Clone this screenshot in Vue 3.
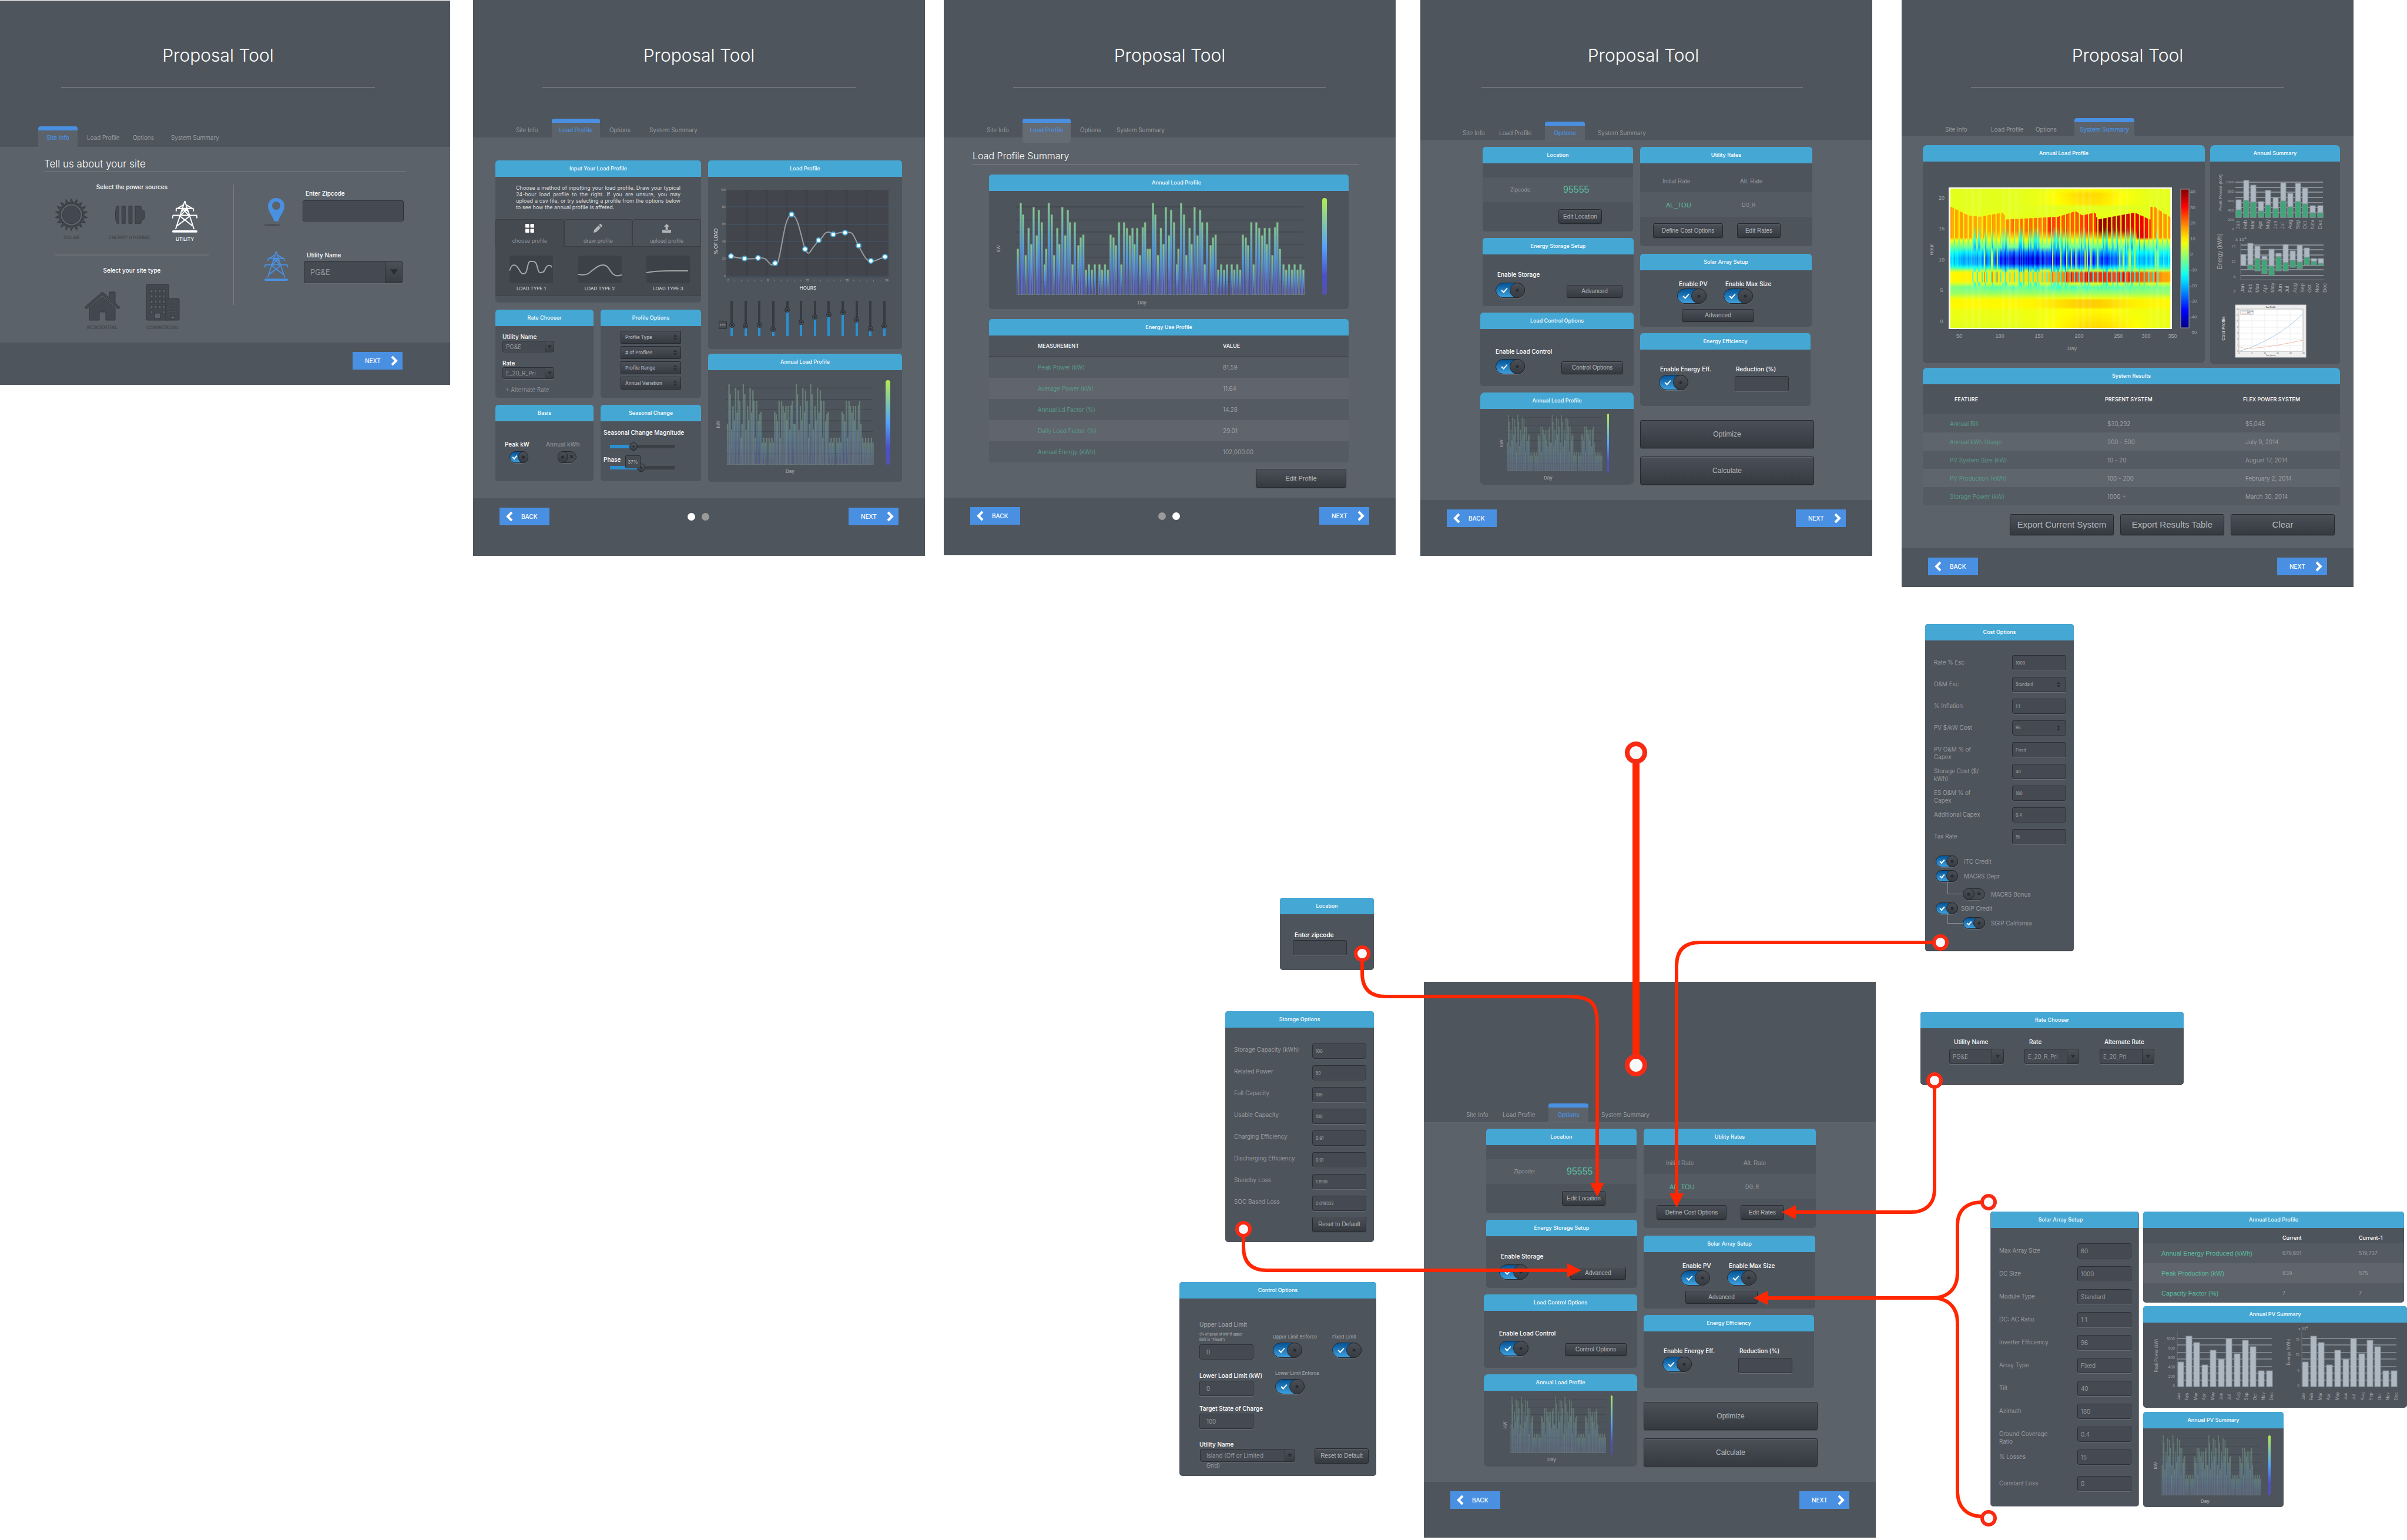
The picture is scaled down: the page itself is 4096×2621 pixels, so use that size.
<script setup>
import { h } from 'vue'

const tabNames = ['Site Info', 'Load Profile', 'Options', 'System Summary']

/* ---- annual load bars: [x, top] on a 985 x 259 field ---- */
const firstHalf = [
  [265, 698], [275, 568], [283, 601], [292, 716], [302, 639], [311, 685], [319, 580], [330, 660], [337, 588],
  [347, 623], [357, 742], [362, 698], [371, 568], [381, 601], [389, 716], [400, 639], [407, 685], [417, 580],
  [427, 660], [436, 588], [443, 623], [452, 742], [460, 623], [472, 688], [480, 666], [489, 658], [498, 757],
  [508, 742], [518, 757], [528, 742], [544, 742], [553, 757], [563, 742], [573, 757], [582, 658], [592, 666],
  [600, 688], [611, 623], [619, 742], [628, 623], [638, 639], [648, 660], [657, 639], [664, 685], [673, 639],
  [683, 716], [692, 637], [700, 623], [709, 698]
]
const tail = [[1173, 742], [1182, 757], [1192, 742], [1202, 757], [1211, 742], [1221, 757], [1231, 742], [1241, 757]]
const loadBars = [...firstHalf, ...firstHalf.map(([x, y]) => [x + 452, y]), ...tail]
const loadLines = [579, 616, 650, 685, 721, 757, 791]

const LoadBars = props =>
  h('svg', { viewBox: '257 567 990 261', preserveAspectRatio: 'none', 'aria-hidden': 'true' }, [
    h('defs', [
      h('linearGradient', { id: 'bar-' + props.name, x1: 0, y1: 0, x2: 0, y2: 1 }, [
        h('stop', { offset: 0, 'stop-color': '#82cf86' }),
        h('stop', { offset: 0.45, 'stop-color': '#4b9bea' }),
        h('stop', { offset: 0.8, 'stop-color': '#4b55c4' }),
        h('stop', { offset: 1, 'stop-color': '#4c4fae' })
      ])
    ]),
    ...loadLines.map(y => h('path', { d: `M257 ${y}H1242`, stroke: '#3d4249', 'stroke-width': 2 })),
    ...loadBars.map(([x, y]) =>
      h('rect', {
        x: x - 3, y, width: 6, height: 827 - y,
        fill: `url(#bar-${props.name})`, 'fill-opacity': props.ink || 1,
        stroke: '#80998f', 'stroke-opacity': props.ink ? 0.5 : 0.6,
        'stroke-width': props.ink ? 3 : 2
      })
    )
  ])
LoadBars.props = ['name', 'ink']

/* ---- day / hour heat map ---- */
const pick = (stops, t) => {
  for (let i = 1; i < stops.length; i++) {
    if (t <= stops[i][0]) {
      const [a, x] = stops[i - 1]
      const [b, y] = stops[i]
      return x + ((y - x) * (t - a)) / (b - a || 1)
    }
  }
  return stops[stops.length - 1][1]
}
const jet = v => {
  const t = (v + 50) / 92
  const c = k => Math.round(255 * Math.max(0, Math.min(1, 1.5 - Math.abs(4 * t - k))))
  return `rgb(${c(3)},${c(2)},${c(1)})`
}
const noise = i => {
  const s = Math.sin(i * 12.9898) * 43758.5453
  return s - Math.floor(s)
}
const warm = [[0, 14], [0.24, 14], [0.25, 18], [0.43, 20], [0.44, 26], [0.55, 20], [0.6, 25], [0.66, 23], [0.67, 39], [0.75, 36], [0.85, 31], [0.91, 28], [0.92, 16], [1, 15]]
const cold = [[0, -20], [0.08, -24], [0.2, -30], [0.25, -42], [0.4, -43], [0.5, -38], [0.7, -35], [0.8, -24], [1, -20]]
const edge = [[0, 0.13], [0.08, 0.19], [0.13, 0.2], [0.24, 0.17], [0.25, 0.22], [0.49, 0.2], [0.57, 0.16], [0.6, 0.19], [0.66, 0.17], [0.67, 0.22], [0.84, 0.17], [0.91, 0.22], [0.915, 0.11], [0.96, 0.16], [1, 0.2]]
const lowBand = [[0, 8], [0.42, 11], [0.5, 17], [0.56, 24], [0.7, 27], [0.85, 24], [1, 15]]
const COLS = 190
const heat = Array.from({ length: COLS }, (_, i) => {
  const u = i / (COLS - 1)
  const n = noise(i + 1)
  const mid = u > 0.1 && u < 0.95
  const off = i % 4 === 3
  const streak = n > 0.88 && mid
  const deep = noise(i * 7 + 3) > 0.72 && mid
  const e = pick(edge, u)
  const hump = Math.exp(-(((u - 0.63) / 0.17) ** 2))
  const w = off ? 7 : pick(warm, u) + n * 3
  const c = streak ? 2 : pick(cold, u) * (off ? 1.1 : 0.75 + n * 0.3)
  const lo = off && mid ? -14 : pick(lowBand, u) + (streak ? 8 : 0)
  return [
    [0, 5 + 2 * hump], [0.04, 5 + 6 * hump], [0.11, 5 + 5 * hump], [0.13, 5], [e, 5 + n], [e + 0.004, w],
    [deep ? 0.27 : 0.3 + (u < 0.15 || u > 0.85 ? 0.05 : 0), w], [0.37, deep ? -12 : off ? -8 : 7],
    [0.42, deep ? -22 : -6], [0.46, c * 0.75],
    [0.5, c], [0.54, c * 0.95], [0.565, c * 0.6], [0.59, deep ? c * 0.5 : 2], [0.605, lo], [0.665, lo],
    [0.68, deep ? -12 : 4], [0.71, -4 - 9 * n * Math.sin(Math.PI * u)], [0.75, -2], [0.79, 6], [0.8, 8 + 4 * hump],
    [0.85, 8 + 4 * hump], [0.87, 6 + 2 * hump], [1, 5 + 6 * Math.exp(-(((u - 0.66) / 0.2) ** 2))]
  ]
})
const HeatMap = () =>
  h('g', [
    h('defs', heat.map((s, i) =>
      h('linearGradient', { id: 'heat' + i, x1: 0, y1: 0, x2: 0, y2: 1 },
        s.map(([o, v]) => h('stop', { offset: o, 'stop-color': jet(v) }))))),
    h('rect', { x: 44, y: 44, width: 380, height: 241, fill: '#fff' }),
    ...heat.map((_, i) =>
      h('rect', { x: 47 + (i * 374) / COLS, y: 46, width: 374 / COLS + 0.3, height: 237, fill: `url(#heat${i})` })),
    h('defs', [
      h('linearGradient', { id: 'heat-scale', x1: 0, y1: 0, x2: 0, y2: 1 },
        Array.from({ length: 24 }, (_, k) => h('stop', { offset: k / 23, 'stop-color': jet(42 - k * 4) })))
    ]),
    h('rect', { x: 439, y: 47, width: 14, height: 236, fill: 'url(#heat-scale)', stroke: '#9aa0a6' })
  ])
const hourMarks = [[20, 65], [15, 117], [10, 170], [5, 222], [0, 275]]
const dayMarks = [[50, 62], [100, 131], [150, 198], [200, 266], [250, 333], [300, 380], [350, 425]]
const scaleMarks = [40, 30, 20, 10, 0, -10, -20, -30, -40, -50]

/* ---- monthly charts ---- */
const months = ['Jan', 'Feb', 'Mar', 'Apr', 'May', 'Jun', 'Jul', 'Aug', 'Sep', 'Oct', 'Nov', 'Dec']
const peakBars = [[65, 82], [32, 66], [40, 69], [68, 84], [49, 74], [61, 80], [36, 67], [54, 77], [37, 68], [45, 72], [75, 87], [75, 87]]
const energyBars = [[158, 177, 177], [139, 176, 183], [144, 165, 186], [161, 167, 191], [149, 178, 194], [156, 162, 186], [141, 172, 186], [152, 168, 180], [142, 171, 182], [147, 163, 176], [165, 170, 177], [165, 173, 177]]
const pvTops = [67, 23, 34, 72, 47, 62, 27, 53, 30, 41, 82, 82]
const pvLines = [27, 38, 51, 62, 75, 86, 98]

/* ---- load profile editor ---- */
const points = [[39, 135], [62, 139], [85, 138], [114, 147], [142, 64], [165, 123], [188, 108], [213, 98], [233, 95], [256, 117], [277, 143], [301, 136]]
const levels = [28, 26, 27, 13, 78, 38, 54, 62, 71, 45, 15, 26]
const hourTicks = Array.from({ length: 25 }, (_, i) => i)
const profileSelects = ['Profile Type', '# of Profiles', 'Profile Range', 'Annual Variation']
const loadTypes = [
  ['LOAD TYPE 1', 'M0 26C3 16 7 14 12 18S18 31 23 31 29 28 31 18 35 10 40 10 46 14 48 22 52 30 57 28 60 18 66 17 71 19 72 20'],
  ['LOAD TYPE 2', 'M0 32C5 33 12 34 18 30S32 16 42 16 54 28 60 32 68 34 74 33'],
  ['LOAD TYPE 3', 'M0 29C14 26 28 26 40 26S62 26 71 26']
]

/* ---- tables and forms ---- */
const energyUse = [['Peak Power (kW)', '81.59'], ['Average Power (kW)', '11.64'], ['Annual Ld Factor (%)', '14.28'], ['Daily Load Factor (%)', '29.01'], ['Annual Energy (kWh)', '102,000.00']]
const results = [
  ['Annual Bill', '$30,292', '$5,048'],
  ['Annual kWh Usage', '200 - 500', 'July 9, 2014'],
  ['PV System Size (kW)', '10 - 20', 'August 17, 2014'],
  ['PV Production (kWh)', '100 - 200', 'February 2, 2014'],
  ['Storage Power (kW)', '1000 +', 'March 30, 2014']
]
const costRows = [['Rate % Esc', '1000'], ['O&M Esc', 'Standard', true], ['% Inflation', '1:1'], ['PV $/kW Cost', '96', true], ['PV O&M % of Capex', 'Fixed'], ['Storage Cost ($/ kWh)', '40'], ['ES O&M % of Capex', '180'], ['Additional Capex', '0.4'], ['Tax Rate', '15']]
const storageRows = [['Storage Capacity (kWh)', '100'], ['Related Power', '50'], ['Full Capacity', '108'], ['Usable Capacity', '108'], ['Charging Efficiency', '0.91'], ['Discharging Efficiency', '0.91'], ['Standby Loss', '1.1998'], ['SOC Based Loss', '0.019332']]
const solarRows = [['Max Array Size', '60'], ['DC Size', '1000'], ['Module Type', 'Standard'], ['DC: AC Ratio', '1:1'], ['Inverter Efficiency', '96'], ['Array Type', 'Fixed'], ['Tilt', '40'], ['Azimuth', '180'], ['Ground Coverage Ratio', '0.4'], ['% Losses', '15'], ['Constant Loss', '0']]
const produced = [['Annual Energy Produced (kWh)', '679,601', '519,737'], ['Peak Production (kW)', '839', '575'], ['Capacity Factor (%)', '7', '7']]
const rates = [['Utility Name', 'PG&E'], ['Rate', 'E_20_R_Pri'], ['Alternate Rate', 'E_20_Pri']]

const towerPath = 'M22 1 6 50M22 1 38 50M7 14H37M1 26H43M7 14V19M37 14V19M1 26V31M43 26V31M18 14 29 26M26 14 15 26M13 27 35 44M31 27 9 44M16 20 22 14 28 20M9 14 19 8M35 14 25 8'
const rays = Array.from({ length: 18 }, (_, i) => i * 20)

/* both Options boards share one template */
const optionBoards = [{ id: 'o1', cls: 'b4', title: true }, { id: 'o2', cls: 'b6', title: false }]
</script>

<template>
  <main class="canvas">
    <div class="flow">
      <!-- Site Info -->
      <section class="board b1">
        <header class="top">
          <h1>Proposal Tool</h1>
          <hr>
          <nav class="tabs"><a v-for="(t, i) in tabNames" :key="t" href="#" :class="{ on: i === 0 }">{{ t }}</a></nav>
        </header>
        <div class="body">
          <h2>Tell us about your site</h2>
          <div class="site">
            <div class="choices">
              <h4>Select the power sources</h4>
              <div class="sources">
                <button class="pick">
                  <svg class="ic" viewBox="0 0 56 56"><g fill="#434850" stroke="#34383e"><circle cx="28" cy="28" r="15.500" /><path v-for="r in rays" :key="r" d="M24.500 9 28 0 31.500 9Z" :transform="`rotate(${r} 28 28)`" /></g></svg>
                  <span>SOLAR</span>
                </button>
                <button class="pick">
                  <svg class="ic" viewBox="0 0 52 56"><g fill="#434850" stroke="#34383e"><path d="M7 13H4Q1 16 1 28T4 43H7ZM12 13H18V43H12ZM24 13H30V43H24ZM35 13H45L47 20 51 22V35L47 37 45 43H35Z" /></g></svg>
                  <span>ENERGY STORAGE</span>
                </button>
                <button class="pick lit">
                  <svg class="ic" viewBox="0 0 44 56"><path :d="towerPath" fill="none" stroke="#fff" stroke-width="2" /><rect y="52" width="44" height="4" rx="2" fill="#fff" /></svg>
                  <span>UTILITY</span>
                </button>
              </div>
              <hr>
              <h4>Select your site type</h4>
              <div class="types">
                <button class="pick">
                  <svg width="62" height="50" viewBox="0 0 62 50"><g fill="#434850" stroke="#34383e"><path d="M9 28 31 9 53 28V49H37V35H26V49H9Z" /><path d="M31 1 43 11V1H53V20L61 27 58 30 31 6 4 30 1 27Z" /></g></svg>
                  <span>RESIDENTIAL</span>
                </button>
                <button class="pick">
                  <svg width="58" height="63" viewBox="0 0 58 63">
                    <g fill="#434850" stroke="#34383e"><rect x="1" y="1" width="38" height="61" rx="2" /><rect x="34" y="25" width="23" height="37" rx="2" /></g>
                    <g fill="#5c636b" stroke="#34383e">
                      <template v-for="r in 5" :key="r"><rect v-for="c in 4" v-show="r < 5 || c === 1 || c === 4" :key="c" :x="1 + c * 7" :y="1 + r * 9" width="4" height="5" /></template>
                      <rect x="15" y="50" width="10" height="9" />
                      <template v-for="r in 5" :key="'s' + r"><rect v-for="c in 4" :key="c" :x="34 + c * 4" :y="26 + r * 5" width="2" height="2" stroke-width="0.500" /></template>
                      <rect x="43" y="55" width="6" height="5" />
                    </g>
                  </svg>
                  <span>COMMERCIAL</span>
                </button>
              </div>
            </div>
            <div class="where">
              <div class="whererow">
                <svg class="pin" viewBox="0 0 40 48"><ellipse cx="15" cy="46" rx="14" ry="2" fill="#4b5056" /><path fill="#4a90e2" fill-rule="evenodd" d="M22 0C14 0 8 6 8 14 8 22 16 31 18 38Q19 40 22 40T26 38C28 31 36 22 36 14 36 6 30 0 22 0ZM22 6A7 7 0 1 1 22 20 7 7 0 0 1 22 6Z" /></svg>
                <label class="stack">Enter Zipcode<input type="text" class="box zip"></label>
              </div>
              <div class="whererow">
                <svg class="pylon" viewBox="0 0 44 56"><path :d="towerPath" fill="none" stroke="#4a90e2" stroke-width="2" /><rect y="52" width="44" height="4" rx="2" fill="#4a90e2" /></svg>
                <label class="stack">Utility Name<select class="drop big"><option>PG&amp;E</option></select></label>
              </div>
            </div>
          </div>
        </div>
        <footer class="foot"><button class="go next">NEXT<svg viewBox="0 0 12 18"><path d="M2 2 9 9 2 16" /></svg></button></footer>
      </section>

      <!-- Load Profile, editor -->
      <section class="board b2">
        <header class="top">
          <h1>Proposal Tool</h1>
          <hr>
          <nav class="tabs"><a v-for="(t, i) in tabNames" :key="t" href="#" :class="{ on: i === 1 }">{{ t }}</a></nav>
        </header>
        <div class="body profile">
          <div class="col">
            <article class="panel inputp">
              <h3>Input Your Load Profile</h3>
              <p>Choose a method of inputting your load profile. Draw your typical 24-hour load profile to the right. If you are unsure, you may upload a&nbsp;csv&nbsp;file, or try selecting a profile from the options below to see how&nbsp;the&nbsp;annual profile is affeted.</p>
              <div class="modes">
                <button class="mode here"><svg viewBox="0 0 16 16"><g fill="#fff"><rect width="7" height="7" rx="1" /><rect x="9" width="7" height="7" rx="1" /><rect y="9" width="7" height="7" rx="1" /><rect x="9" y="9" width="7" height="7" rx="1" /></g></svg>choose profile</button>
                <button class="mode"><svg viewBox="0 0 16 16"><path fill="#b3b5b8" d="M0 16 1 11 9 3 13 7 5 15ZM10 2 12 0Q13 0 14.500 1.500T16 4L14 6Z" /></svg>draw profile</button>
                <button class="mode"><svg viewBox="0 0 16 16"><path fill="#b3b5b8" d="M8 0 13 5H10V11H6V5H3ZM0 11H5V12H11V11H16V16H0Z" /></svg>upload profile</button>
              </div>
              <div class="kinds">
                <figure v-for="k in loadTypes" :key="k[0]">
                  <svg viewBox="0 0 74 47"><path :d="k[1]" fill="none" stroke="#a3a5a7" stroke-width="2" /></svg>
                  <figcaption>{{ k[0] }}</figcaption>
                </figure>
              </div>
            </article>
            <div class="pair">
              <article class="panel chooser">
                <h3>Rate Chooser</h3>
                <label class="stack">Utility Name<select class="drop small"><option>PG&amp;E</option></select></label>
                <label class="stack">Rate<select class="drop small"><option>E_20_R_Pri</option></select></label>
                <a href="#" class="alt">+ Alternate Rate</a>
              </article>
              <article class="panel popts">
                <h3>Profile Options</h3>
                <select v-for="s in profileSelects" :key="s" class="spin" :aria-label="s"><option>{{ s }}</option></select>
              </article>
            </div>
            <div class="pair">
              <article class="panel basis">
                <h3>Basis</h3>
                <div class="switches">
                  <label class="stack">Peak kW<input type="checkbox" class="toggle xs" checked></label>
                  <label class="stack dim">Annual kWh<input type="checkbox" class="toggle xs"></label>
                </div>
              </article>
              <article class="panel season">
                <h3>Seasonal Change</h3>
                <label class="stack">Seasonal Change Magnitude<input type="range" class="slide" value="34" :style="{ '--v': '36%' }"></label>
                <label class="stack">Phase<input type="range" class="slide" value="48" :style="{ '--v': '48%' }"></label>
                <span class="tip">37%</span>
              </article>
            </div>
          </div>
          <div class="col right">
            <article class="panel editor">
              <h3>Load Profile</h3>
              <svg class="plot" viewBox="0 0 330 200" font-family="Inter, sans-serif" fill="#a4a7ab" font-size="5">
                <rect x="31" y="22" width="276" height="149" fill="#42454c" />
                <path v-for="i in 7" :key="i" :d="`M${32 + i * 34} 22V171`" stroke="#383b41" />
                <path v-for="y in [51, 81, 110, 139, 169]" :key="y" :d="`M32 ${y}H307`" stroke="#42586c" />
                <text v-for="(y, i) in [24, 53, 82, 112, 141, 171]" :key="'t' + y" x="30" :y="y" text-anchor="end">{{ 100 - i * 20 }}</text>
                <template v-for="i in hourTicks" :key="'h' + i"><text v-if="i % 6 === 0" :x="34 + i * 11.250" y="178" text-anchor="middle">{{ i }}</text><path v-else :d="`M${34 + i * 11.250} 175v3`" stroke="#7d8187" /></template>
                <path d="M39 135C48 138 56 138 62 139 72 140 78 140 85 138 97 136 100 142 106 149 112 151 118 149 119 144 126 122 130 66 142 64 154 66 158 104 165 123 169 132 172 132 176 124L188 108C196 105 196 94 205 94 209 94 210 97 216 97 224 96 224 93 233 95 248 91 247 101 256 117 263 130 270 147 279 144 288 142 294 138 301 136" fill="none" stroke="#999b9e" stroke-width="2" />
                <circle v-for="p in points" :key="p[0]" :cx="p[0]" :cy="p[1]" r="4" fill="#fff" stroke="#45a7d4" stroke-width="2" />
                <text x="170" y="192" text-anchor="middle" font-size="8" fill="#e6e7e8">HOURS</text>
                <text transform="translate(16 110) rotate(-90)" text-anchor="middle" font-size="8" fill="#e6e7e8">% OF LOAD</text>
              </svg>
              <div class="faders">
                <span class="mini">37%</span>
                <input v-for="(l, i) in levels" :key="i" type="range" class="fader" :value="l" :aria-label="'Level ' + (i + 1)" :style="{ '--v': l + '%' }">
              </div>
            </article>
            <article class="panel annual">
              <h3>Annual Load Profile</h3>
              <div class="lc lc-b"><span class="kw">kW</span><LoadBars class="bars" name="b" :ink="0.35" /><i class="scale" /><span class="day">Day</span></div>
            </article>
          </div>
        </div>
        <footer class="foot">
          <button class="go"><svg viewBox="0 0 12 18"><path d="M10 2 3 9 10 16" /></svg>BACK</button>
          <span class="dots"><i class="lit-dot" /><i /></span>
          <button class="go next">NEXT<svg viewBox="0 0 12 18"><path d="M2 2 9 9 2 16" /></svg></button>
        </footer>
      </section>

      <!-- Load Profile, summary -->
      <section class="board b3">
        <header class="top">
          <h1>Proposal Tool</h1>
          <hr>
          <nav class="tabs"><a v-for="(t, i) in tabNames" :key="t" href="#" :class="{ on: i === 1 }">{{ t }}</a></nav>
        </header>
        <div class="body summary">
          <h2>Load Profile Summary</h2>
          <article class="panel wide">
            <h3>Annual Load Profile</h3>
            <div class="lc lc-a"><span class="kw">kW</span><LoadBars class="bars" name="a" /><i class="scale" /><span class="day">Day</span></div>
          </article>
          <article class="panel use">
            <h3>Energy Use Profile</h3>
            <table>
              <thead><tr><th>MEASUREMENT</th><th>VALUE</th></tr></thead>
              <tbody><tr v-for="r in energyUse" :key="r[0]"><td>{{ r[0] }}</td><td>{{ r[1] }}</td></tr></tbody>
            </table>
          </article>
          <button class="dark edit">Edit Profile</button>
        </div>
        <footer class="foot">
          <button class="go"><svg viewBox="0 0 12 18"><path d="M10 2 3 9 10 16" /></svg>BACK</button>
          <span class="dots"><i /><i class="lit-dot" /></span>
          <button class="go next">NEXT<svg viewBox="0 0 12 18"><path d="M2 2 9 9 2 16" /></svg></button>
        </footer>
      </section>

      <!-- Options, plain and annotated -->
      <section v-for="o in optionBoards" :key="o.id" class="board opts" :class="o.cls">
        <header class="top">
          <template v-if="o.title"><h1>Proposal Tool</h1><hr></template>
          <nav class="tabs"><a v-for="(t, i) in tabNames" :key="t" href="#" :class="{ on: i === 2 }">{{ t }}</a></nav>
        </header>
        <div class="body">
          <div class="col left">
            <article class="panel loc">
              <h3>Location</h3>
              <p class="band"><span>Zipcode:</span><b>95555</b></p>
              <button class="dark">Edit Location</button>
            </article>
            <article class="panel sto">
              <h3>Energy Storage Setup</h3>
              <div class="line">
                <label class="stack">Enable Storage<input type="checkbox" class="toggle" checked></label>
                <button class="dark">Advanced</button>
              </div>
            </article>
            <article class="panel ctl">
              <h3>Load Control Options</h3>
              <div class="line">
                <label class="stack">Enable Load Control<input type="checkbox" class="toggle" checked></label>
                <button class="dark">Control Options</button>
              </div>
            </article>
            <article class="panel alp">
              <h3>Annual Load Profile</h3>
              <div class="lc lc-c"><span class="kw">kW</span><LoadBars class="bars" :name="o.id" :ink="0.25" /><i class="scale" /><span class="day">Day</span></div>
            </article>
          </div>
          <div class="col right">
            <article class="panel rat">
              <h3>Utility Rates</h3>
              <table>
                <thead><tr><th>Initial Rate</th><th>Alt. Rate</th></tr></thead>
                <tbody><tr><td>AL_TOU</td><td>DG_R</td></tr></tbody>
              </table>
              <div class="acts"><button class="dark">Define Cost Options</button><button class="dark">Edit Rates</button></div>
            </article>
            <article class="panel sol">
              <h3>Solar Array Setup</h3>
              <div class="line">
                <label class="stack">Enable PV<input type="checkbox" class="toggle" checked></label>
                <label class="stack">Enable Max Size<input type="checkbox" class="toggle" checked></label>
              </div>
              <button class="dark">Advanced</button>
            </article>
            <article class="panel eff">
              <h3>Energy Efficiency</h3>
              <div class="line">
                <label class="stack">Enable Energy Eff.<input type="checkbox" class="toggle" checked></label>
                <label class="stack">Reduction (%)<input type="text" class="box"></label>
              </div>
            </article>
            <button class="dark huge">Optimize</button>
            <button class="dark huge">Calculate</button>
          </div>
        </div>
        <footer class="foot">
          <button class="go"><svg viewBox="0 0 12 18"><path d="M10 2 3 9 10 16" /></svg>BACK</button>
          <button class="go next">NEXT<svg viewBox="0 0 12 18"><path d="M2 2 9 9 2 16" /></svg></button>
        </footer>
      </section>

      <!-- System Summary -->
      <section class="board b5">
        <header class="top">
          <h1>Proposal Tool</h1>
          <hr>
          <nav class="tabs"><a v-for="(t, i) in tabNames" :key="t" href="#" :class="{ on: i === 3 }">{{ t }}</a></nav>
        </header>
        <div class="body">
          <div class="charts">
            <article class="panel map">
              <h3>Annual Load Profile</h3>
              <svg class="plot" viewBox="0 0 480 343" font-family="Liberation Sans, sans-serif" font-size="9" fill="#a4a7ab">
                <HeatMap />
                <text v-for="m in hourMarks" :key="'y' + m[0]" x="32" :y="m[1]" text-anchor="middle">{{ m[0] }}</text>
                <text v-for="m in dayMarks" :key="'x' + m[0]" :x="m[1]" y="300" text-anchor="middle">{{ m[0] }}</text>
                <text v-for="(m, i) in scaleMarks" :key="'s' + m" x="455" :y="Math.round(54 + i * 26.600)" font-size="8">{{ m }}</text>
                <text x="254" y="321" text-anchor="middle">Day</text>
                <text transform="translate(18 150) rotate(-90)" text-anchor="middle">Hour</text>
              </svg>
            </article>
            <article class="panel sums">
              <h3>Annual Summary</h3>
              <svg class="plot" viewBox="0 0 221 345" font-family="Liberation Sans, sans-serif" font-size="6" fill="#a4a7ab">
                <path v-for="y in [35, 44, 52, 61, 70, 78, 87]" :key="y" :d="`M43 ${y}H192`" stroke="#c0c5ca" />
                <g v-for="(b, i) in peakBars" :key="'p' + i" stroke="#868e96">
                  <rect :x="Math.round(44 + i * 12.600)" :y="b[0]" width="9" :height="95 - b[0]" fill="#adb8c2" />
                  <rect :x="Math.round(44 + i * 12.600)" :y="b[1]" width="9" :height="95 - b[1]" fill="#3fa677" />
                </g>
                <text v-for="(y, i) in [37, 53, 69, 85, 101, 117]" :key="'v' + y" x="40" :y="y" text-anchor="end">{{ 1000 - i * 200 }}</text>
                <text v-for="(m, i) in months" :key="m" :transform="`translate(${Math.round(50 + i * 12.700)} 115) rotate(-90)`" font-size="9">{{ m }}</text>
                <text transform="translate(20 53) rotate(-90)" text-anchor="middle" font-size="8">Peak Power (kW)</text>
                <path v-for="y in [142, 150, 159, 167, 177, 184, 194]" :key="'e' + y" :d="`M52 ${y}H193`" stroke="#c0c5ca" />
                <path d="M52 138V201H193" fill="none" stroke="#6c7279" />
                <g v-for="(b, i) in energyBars" :key="'n' + i" stroke="#868e96">
                  <rect :x="52 + i * 12" :y="b[0]" width="9" :height="b[1] - b[0]" fill="#adb8c2" />
                  <rect :x="52 + i * 12" :y="b[1]" width="9" :height="b[2] - b[1]" fill="#3fa677" />
                </g>
                <text v-for="(y, i) in [146, 172, 198, 223]" :key="'w' + y" x="43" :y="y" text-anchor="end">{{ 15 - i * 5 }}</text>
                <text x="43" y="135" font-size="8">x 10<tspan dy="-3" font-size="6">4</tspan></text>
                <text v-for="(m, i) in months" :key="'m' + m" :transform="`translate(${Math.round(58 + i * 12.700)} 223) rotate(-90)`" font-size="9">{{ m }}</text>
                <text transform="translate(20 153) rotate(-90)" text-anchor="middle" font-size="10">Energy (kWh)</text>
                <rect x="43" y="244" width="120" height="89" fill="#efefef" stroke="#d0d0d0" />
                <rect x="49" y="251" width="109" height="72" fill="#fff" stroke="#b5b5b5" />
                <path d="M71 251V323M93 251V323M114 251V323M136 251V323M49 313H158M49 302H158M49 292H158M49 282H158M49 271H158M49 261H158" stroke="#ececec" />
                <path d="M49 323Q110 305 158 259" fill="none" stroke="#a7cbe6" />
                <path d="M49 314Q53 320 82 317T158 304" fill="none" stroke="#f0bba8" />
                <rect x="52" y="253" width="21" height="7" fill="#fff" stroke="#b5b5b5" />
                <path d="M54 255h8" stroke="#a7cbe6" /><path d="M54 258h8" stroke="#f0bba8" />
                <g font-size="3" fill="#444">
                  <text x="63" y="256">Current</text><text x="63" y="259">FPS</text>
                  <text x="103" y="249" text-anchor="middle" font-weight="700">Cost Profile</text>
                  <text x="103" y="331" text-anchor="middle">Time (years)</text>
                  <text v-for="i in 6" :key="'k' + i" :x="27 + i * 22" y="327" text-anchor="middle">{{ (i - 1) * 5 }}</text>
                  <text v-for="i in 8" :key="'j' + i" x="48" :y="Math.round(334 - i * 10.300)" text-anchor="end">{{ (i - 1) * 2 }}</text>
                </g>
                <text transform="translate(25 284) rotate(-90)" text-anchor="middle" font-size="8" fill="#e8e9ea">Cost Profile</text>
              </svg>
            </article>
          </div>
          <article class="panel res">
            <h3>System Results</h3>
            <table>
              <thead><tr><th>FEATURE</th><th>PRESENT SYSTEM</th><th>FLEX POWER SYSTEM</th></tr></thead>
              <tbody><tr v-for="r in results" :key="r[0]"><td v-for="c in r" :key="c">{{ c }}</td></tr></tbody>
            </table>
          </article>
          <div class="exports"><button class="dark">Export Current System</button><button class="dark">Export Results Table</button><button class="dark">Clear</button></div>
        </div>
        <footer class="foot">
          <button class="go"><svg viewBox="0 0 12 18"><path d="M10 2 3 9 10 16" /></svg>BACK</button>
          <button class="go next">NEXT<svg viewBox="0 0 12 18"><path d="M2 2 9 9 2 16" /></svg></button>
        </footer>
      </section>

      <!-- dialogs left of the annotated board -->
      <div class="pops">
        <article class="panel dlg zipd">
          <h3>Location</h3>
          <label class="stack">Enter zipcode<input type="text" class="box"></label>
        </article>
        <article class="panel dlg stod">
          <h3>Storage Options</h3>
          <label v-for="r in storageRows" :key="r[0]" class="fld"><span>{{ r[0] }}</span><input type="text" class="box" :value="r[1]"></label>
          <button class="dark">Reset to Default</button>
        </article>
        <article class="panel dlg ctrd">
          <h3>Control Options</h3>
          <div class="limits">
            <label class="stack grey">Upper Load Limit<small>(% of peak of kW if upper limit&nbsp;is&nbsp;“Fixed”)</small><input type="text" class="box" value="0"></label>
            <label class="stack mini-l">Upper Limit Enforce<input type="checkbox" class="toggle" checked></label>
            <label class="stack mini-l">Fixed Limit<input type="checkbox" class="toggle" checked></label>
          </div>
          <div class="limits lower">
            <label class="stack">Lower Load Limit (kW)<input type="text" class="box" value="0"></label>
            <label class="stack mini-l">Lower Limit Enforce<input type="checkbox" class="toggle" checked></label>
          </div>
          <label class="stack charge">Target State of Charge<input type="text" class="box" value="100"></label>
          <div class="last">
            <label class="stack">Utility Name<select class="drop isl"><option>Island (Off or Limited</option></select><span class="rest">Grid)</span></label>
            <button class="dark">Reset to Default</button>
          </div>
        </article>
      </div>

      <!-- dialogs right of the annotated board -->
      <div class="side">
        <article class="panel dlg cost">
          <h3>Cost Options</h3>
          <label v-for="r in costRows" :key="r[0]" class="fld"><span>{{ r[0] }}</span><select v-if="r[2]" class="box pickbox"><option>{{ r[1] }}</option></select><input v-else type="text" class="box" :value="r[1]"></label>
          <div class="tree">
            <label><input type="checkbox" class="toggle sm" checked>ITC Credit</label>
            <label><input type="checkbox" class="toggle sm" checked>MACRS Depr.</label>
            <label class="kid"><input type="checkbox" class="toggle sm">MACRS Bonus</label>
            <label class="sgip"><input type="checkbox" class="toggle sm" checked>SGIP Credit</label>
            <label class="kid near"><input type="checkbox" class="toggle sm" checked>SGIP California</label>
          </div>
        </article>
        <article class="panel dlg rated">
          <h3>Rate Chooser</h3>
          <div><label v-for="r in rates" :key="r[0]" class="stack">{{ r[0] }}<select class="drop mid"><option>{{ r[1] }}</option></select></label></div>
        </article>
        <div class="arrays">
          <article class="panel dlg sold">
            <h3>Solar Array Setup</h3>
            <label v-for="r in solarRows" :key="r[0]" class="fld"><span>{{ r[0] }}</span><input type="text" class="box" :value="r[1]"></label>
          </article>
          <div class="pv">
            <article class="panel dlg made">
              <h3>Annual Load Profile</h3>
              <table>
                <thead><tr><th /><th>Current</th><th>Current-1</th></tr></thead>
                <tbody><tr v-for="r in produced" :key="r[0]"><td>{{ r[0] }}</td><td>{{ r[1] }}</td><td>{{ r[2] }}</td></tr></tbody>
              </table>
            </article>
            <article class="panel dlg pvsum">
              <h3>Annual PV Summary</h3>
              <svg class="plot" viewBox="0 0 449 145" font-family="Inter, sans-serif" font-size="7" fill="#a4a7ab">
                <g v-for="c in 2" :key="c" :transform="`translate(${(c - 1) * 212} 0)`">
                  <path d="M58 15V109" stroke="#6c7279" />
                  <path v-for="y in pvLines" :key="y" :d="`M58 ${y}H219`" stroke="#a9b0b7" />
                  <rect v-for="(y, i) in pvTops" :key="i" :x="Math.round(59 + i * 13.700)" :y="y" width="10" :height="109 - y" fill="#adb8c2" stroke="#868e96" />
                  <text v-for="(m, i) in months" :key="m" :transform="`translate(${Math.round(63 + i * 14.400)} 132) rotate(-90)`">{{ m }}</text>
                </g>
                <text v-for="(y, i) in [30, 46, 62, 78, 94, 110]" :key="'v' + y" x="54" :y="y" text-anchor="end" font-size="6">{{ 1000 - i * 200 }}</text>
                <text v-for="(y, i) in [31, 57, 84, 110]" :key="'w' + y" x="266" :y="y" text-anchor="end" font-size="6">{{ 15 - i * 5 }}</text>
                <text x="264" y="13">x 10<tspan dy="-3" font-size="5">4</tspan></text>
                <text transform="translate(25 56) rotate(-90)" text-anchor="middle">Peak Power (kW)</text>
                <text transform="translate(250 50) rotate(-90)" text-anchor="middle">Energy (kWh)</text>
              </svg>
            </article>
            <article class="panel dlg pvload">
              <h3>Annual PV Summary</h3>
              <div class="lc lc-d"><span class="kw">kW</span><LoadBars class="bars" name="d" :ink="0.3" /><i class="scale" /><span class="day">Day</span></div>
            </article>
          </div>
        </div>
      </div>
    </div>

    <!-- annotation arrows -->
    <svg class="wires" viewBox="0 0 4096 2621" aria-hidden="true">
      <g fill="none" stroke="#ff2600" stroke-width="6">
        <path d="M2784 1281V1813" stroke-width="12" />
        <path d="M2318 1630V1656Q2318 1696 2358 1696H2666C2706 1696 2718 1704 2718 1743V2020" />
        <path d="M2116 2092V2122Q2116 2162 2156 2162H2670" />
        <path d="M3302 1604H2893Q2853 1604 2853 1644V2036" />
        <path d="M3292 1839V2024C3292 2050 3276 2063 3252 2063H3050" />
        <path d="M3004 2209H3291M3288 2209C3316 2209 3331 2192 3331 2167V2085C3331 2060 3346 2046 3374 2046M3288 2209C3316 2209 3331 2226 3331 2251V2538C3331 2564 3346 2581 3374 2581" />
      </g>
      <path fill="#ff2600" d="M2706 2013H2730L2718 2037ZM2667 2150V2174L2691 2162ZM2841 2031H2865L2853 2055ZM3056 2051V2075L3032 2063ZM3008 2197V2221L2984 2209Z" />
      <g fill="#fafafa" stroke="#f82a14" stroke-width="8"><circle cx="2784" cy="1281" r="15" /><circle cx="2784" cy="1813" r="15" /></g>
      <g fill="#fafafa" stroke="#f82a14" stroke-width="6"><circle cx="2318" cy="1623" r="11" /><circle cx="2116" cy="2092" r="11" /><circle cx="3302" cy="1604" r="11" /><circle cx="3292" cy="1839" r="11" /><circle cx="3384" cy="2046" r="11" /><circle cx="3384" cy="2584" r="11" /></g>
    </svg>
  </main>
</template>

<style>
body { background: #fff; }
</style>

<style scoped>
*, *::before, *::after { box-sizing: border-box; }
h1, h2, h3, h4, p, figure { margin: 0; }
button, input, select { font: inherit; color: inherit; margin: 0; }
.canvas { position: relative; width: 100%; overflow: hidden; font: 400 10px/14px Inter, "Liberation Sans", sans-serif; color: #fff; }
.wires { position: absolute; left: 0; top: 0; width: 100%; height: auto; pointer-events: none; }

/* overall plan: five boards, then the annotated board with its dialogs */
.flow {
  display: grid;
  grid-template-columns:
    minmax(0, 766fr) 39fr minmax(0, 769fr) 32fr minmax(0, 401fr) minmax(0, 335fr) 33fr 42fr 6fr
    minmax(0, 763fr) 6fr 44fr 32fr minmax(0, 737fr) 91fr;
  grid-template-rows: auto auto;
  align-items: start;
}
.b1 { grid-area: 1 / 1 / 2 / 2; margin-top: 1px; }
.b2 { grid-area: 1 / 3 / 2 / 4; }
.b3 { grid-area: 1 / 5 / 2 / 8; }
.b4 { grid-area: 1 / 9 / 2 / 11; }
.b5 { grid-area: 1 / 13 / 2 / 15; }
.pops { grid-area: 2 / 6 / 3 / 7; }
.b6 { grid-area: 2 / 10 / 3 / 12; margin-top: 672px; }
.side { grid-area: 2 / 14 / 3 / 16; }

/* boards */
.board { background: #4e555c; min-width: 0; }
.body { background: #5b6269; border-top: 1px solid #60666e; }
.top { text-align: center; padding-top: 76px; }
.top h1 { font-weight: 300; font-size: 30px; line-height: 36px; }
.top hr { border: 0; height: 2px; background: #6e7178; margin: 36px 118px 0; }
.b1 .top { padding: 75px 24px 0 0; }
.b1 .top hr { margin: 36px 104px 0; }
.b4 h1 { padding-right: 10px; }
.b4 .top hr { margin-left: 104px; }
.tabs { display: grid; text-align: left; height: 32px; }
.tabs a { color: #a9acb1; text-decoration: none; font-weight: 300; font-size: 10px; line-height: 25px; padding-top: 7px; white-space: nowrap; }
.tabs a.on { color: #4a90e2; font-weight: 500; background: #5b6269; border-top: 7px solid #4a90e2; padding: 0; border-radius: 4px 4px 0 0; text-align: center; }
.b1 .tabs { margin-top: 65px; height: 35px; padding-left: 65px; grid-template-columns: 83px 78px 65px auto; }
.b1 .tabs .on { width: 67px; }
.b2 .tabs, .b3 .tabs { margin-top: 52px; padding-left: 73px; grid-template-columns: 61px 98px 68px auto; }
.b2 .tabs .on, .b3 .tabs .on { width: 82px; }
.b3 .tabs { grid-template-columns: 61px 98px 62px auto; }
.b3 .tabs .on { height: 41px; border-radius: 4px; background: #656b73; position: relative; }
.opts .tabs { margin-top: 57px; padding-left: 72px; grid-template-columns: 62px 78px 90px auto; }
.opts .tabs .on { width: 68px; }
.b6 .top { padding-top: 150px; }
.b5 .tabs { margin-top: 51px; height: 30px; padding-left: 74px; grid-template-columns: 78px 76px 66px auto; }
.b5 .tabs .on { width: 102px; }

.foot { display: flex; justify-content: space-between; padding: 16px 45px 52px; }
.b1 .foot { justify-content: flex-end; padding: 16px 81px 26px; }
.opts .foot { padding-bottom: 49px; }
.b5 .foot { padding-bottom: 20px; }
.go { display: flex; align-items: center; gap: 14px; width: 85px; height: 30px; padding: 0 0 0 11px; border: 0; background: #4a90e2; color: #fff; font-weight: 500; }
.go.next { gap: 17px; padding-left: 21px; }
.go svg { width: 12px; height: 18px; fill: none; stroke: #fff; stroke-width: 4px; }
.dots { display: flex; gap: 11px; align-items: center; padding-right: 2px; }
.dots i { width: 13px; height: 13px; border-radius: 50%; background: #9a9a9a; }
.dots .lit-dot { background: #fff; }

/* panels */
.panel { background: #4e545c; border-radius: 5px; overflow: hidden; position: relative; min-width: 0; }
.panel h3 { height: 28px; background: #45a7d4; font-size: 9px; line-height: 28px; font-weight: 500; text-align: center; }
.plot { display: block; width: 100%; }
h2 { font-size: 16px; line-height: 24px; font-weight: 300; }

/* controls */
.stack { display: flex; flex-direction: column; align-items: flex-start; font-weight: 500; white-space: nowrap; }
.box { display: block; width: 92px; height: 26px; border: 1px solid #2c3036; border-radius: 3px; background: #454a52; box-shadow: 0 1px 0 #666c74; padding: 0 0 0 5px; color: #a6a9ae; font-weight: 300; outline: 0; appearance: none; }
.dark { border: 1px solid #25282e; border-radius: 3px; background: linear-gradient(#4b5058, #353940); box-shadow: inset 0 1px 0 #5c6169, 0 1px 1px #474c53; font: 400 10px/12px "Liberation Sans", Arial, sans-serif; color: #b4b6ba; padding: 0; white-space: nowrap; height: 25px; }
.drop { appearance: none; border: 1px solid #2c3036; border-radius: 3px; height: 20px; padding: 0 0 0 5px; box-shadow: 0 1px 0 #666c74; color: #a6a9ae; font-weight: 300;
  background:
    url("data:image/svg+xml,%3Csvg xmlns='http://www.w3.org/2000/svg' viewBox='0 0 12 9' width='12' height='9'%3E%3Cpath d='M0 0H12L6 9Z' fill='%232a2d33'/%3E%3C/svg%3E") right 7px center / var(--t) no-repeat,
    linear-gradient(90deg, #2c3036 1px, transparent 1px) right / var(--a) 100% no-repeat,
    linear-gradient(#4b5058, #383c43) right / var(--a) 100% no-repeat,
    #454a52; }
.small { --a: 15px; --t: 7px 6px; width: 88px; background-position: right 3px center, right, right; }
.big { --a: 29px; --t: 13px 10px; width: 168px; height: 38px; padding-left: 10px; margin-top: 3px; font-size: 13px; text-indent: 0; }
.mid { --a: 20px; --t: 9px 6px; width: 93px; height: 26px; background-position: right 5px center, right, right; }
.isl { --a: 17px; --t: 8px 6px; width: 162px; height: 22px; padding-left: 10px; margin: 1px 0 0 1px; background-position: right 4px center, right, right; }
.spin, .pickbox { appearance: none;
  background: url("data:image/svg+xml,%3Csvg xmlns='http://www.w3.org/2000/svg' width='6' height='10'%3E%3Cpath d='M0 4 3 0 6 4ZM0 6 3 10 6 6Z' fill='%232a2d33'/%3E%3C/svg%3E") right 9px center no-repeat, #454a52; }
.spin { display: block; width: 103px; height: 22px; border: 1px solid #25282e; border-radius: 2px; padding: 0 0 0 7px; font-size: 8px; color: #b4b6ba; font-weight: 500; background: url("data:image/svg+xml,%3Csvg xmlns='http://www.w3.org/2000/svg' width='6' height='10'%3E%3Cpath d='M0 4 3 0 6 4ZM0 6 3 10 6 6Z' fill='%232a2d33'/%3E%3C/svg%3E") right 6px center no-repeat, linear-gradient(#4b5058, #353940); }
.toggle { appearance: none; position: relative; flex: none; width: 50px; height: 26px; border: 1px solid #24282e; border-radius: 13px; background: #454a51; box-shadow: 0 1px 0 #666c74; }
.toggle:checked { background: linear-gradient(#045496, #3fa0de); }
.toggle::after { content: ""; position: absolute; top: -1px; left: -1px; width: 26px; height: 26px; border: 1px solid #24272c; border-radius: 50%; background: radial-gradient(circle, #272a2f 2px, transparent 3px), linear-gradient(#4a4f57, #363a41); }
.toggle:checked::after { left: auto; right: -1px; }
.toggle::before { content: "✖"; position: absolute; right: 6px; top: 3px; font: 8px/12px "DejaVu Sans", sans-serif; color: #25282d; }
.toggle:checked::before { content: ""; right: auto; left: 9px; top: 8px; width: 10px; height: 6px; border: solid #fff; border-width: 0 0 2px 2px; transform: rotate(-48deg); }
.sm { width: 38px; height: 20px; }
.xs { width: 32px; height: 20px; }
.sm::after { width: 20px; height: 20px; }
.xs::after { width: 17px; height: 20px; border-radius: 9px; }
.sm:checked::before, .xs:checked::before { left: 6px; top: 6px; width: 8px; height: 5px; }
.xs:checked::before { left: 4px; }
.xs::before { right: 4px; }

/* load charts */
.lc { display: grid; }
.kw { writing-mode: vertical-rl; transform: rotate(180deg); align-self: center; font-size: 8px; line-height: 12px; color: #a4a7ab; justify-self: start; }
.bars { width: 100%; height: 100%; display: block; }
.scale { border-radius: 4px; background: linear-gradient(#b4ec51, #54a3fb 50%, #4a51c6 80%, #5452ac); }
.day { grid-column: 2; font-size: 8px; line-height: 12px; font-weight: 500; color: #a4a7ab; }
.lc-a { grid-template: 157px 24px / 45px 1fr 29px 8px 37px; padding: 20px 0 0; }
.lc-a .kw { margin-left: 10px; }
.lc-a .scale { grid-column: 4; margin-top: -8px; }
.lc-a .day { padding: 7px 0 0 208px; }
.lc-b { grid-template: 137px 29px / 31px 1fr 20px 8px 20px; padding-top: 24px; }
.lc-b .kw { margin-left: 11px; }
.lc-b .scale { grid-column: 4; margin-top: -7px; }
.lc-b .day { padding: 5px 0 0 101px; }
.lc-c { grid-template: 96px 23px / 45px 1fr 8px 3px 42px; padding-top: 10px; }
.lc-c .kw { margin-left: 30px; }
.lc-c .scale { grid-column: 4; margin: -2px 0 -3px; }
.lc-c .day { padding: 5px 0 0 63px; }
.lc-d { grid-template: 102px 20px / 31px 1fr 12px 4px 22px; padding-top: 12px; }
.lc-d .kw { margin-left: 15px; }
.lc-d .scale { grid-column: 4; }
.lc-d .day { padding: 4px 0 0 67px; }

/* site info */
.b1 h2 { margin: 16px 75px 0; font-size: 17px; border-bottom: 2px solid #6b6f76; }
.site { display: grid; grid-template-columns: 397fr 369fr; padding-bottom: 20px; }
.choices { padding: 18px 42px 0 94px; }
.choices h4 { font-size: 10px; font-weight: 500; text-align: center; }
.choices hr { border: 0; height: 2px; background: #6b6f76; margin: 20px 0 18px; }
.pick { display: flex; flex-direction: column; align-items: center; gap: 5px; border: 0; background: none; padding: 0; font-size: 8px; line-height: 12px; font-weight: 600; color: #43474d; white-space: nowrap; }
.lit { color: #fff; margin-top: 3px; font-weight: 500; }
.ic { width: 100%; height: 55px; }
.sources { display: grid; grid-template-columns: 55px 72px 43px; column-gap: 36px; margin-top: 13px; align-items: start; }
.sources .pick:nth-child(2) .ic { width: 52px; }
.types { display: flex; justify-content: center; align-items: flex-end; gap: 43px; margin-top: 16px; }
.where { margin-top: 21px; height: 205px; border-left: 1px solid #777a81; padding: 8px 0 0 50px; }
.whererow { display: flex; height: 63px; margin-bottom: 42px; }
.pin { width: 40px; height: 48px; margin: 15px 27px 0 0; }
.pylon { width: 40px; height: 51px; margin: 0 27px 0 2px; }
.where .stack { text-indent: 5px; }
.zip { width: 172px; height: 36px; margin-top: 5px; }

/* load profile editor */
.profile { display: grid; grid-template-columns: minmax(0, 350fr) minmax(0, 330fr); gap: 12px; padding: 38px 39px 28px 38px; }
.profile .col { display: flex; flex-direction: column; gap: 12px; min-width: 0; }
.profile .right { gap: 8px; }
.inputp { padding-bottom: 11px; }
.inputp p { margin: 13px 35px 15px; font-size: 9px; line-height: 11px; color: #dcddde; text-align: justify; }
.modes { display: grid; grid-template-columns: 1fr 1fr 1fr; }
.mode { display: flex; flex-direction: column; align-items: center; gap: 8px; height: 47px; padding: 7px 0 0; border: 1px solid #3b3f45; border-radius: 4px 4px 0 0; background: #4b5158; font-size: 9px; line-height: 12px; font-weight: 300; color: #a9acb1; }
.here { background: #454a51; border-bottom-color: #454a51; }
.mode svg { width: 15px; height: 15px; }
.kinds { display: flex; justify-content: space-between; padding: 15px 19px 6px 24px; background: #454a51; border-bottom: 1px solid #3b3f45; }
.kinds figure { text-align: center; }
.kinds svg { display: block; width: 74px; height: 47px; border-radius: 4px; background: #3c4047; }
.kinds figcaption { font-size: 8px; line-height: 12px; margin-top: 3px; color: #dcddde; }
.pair { display: grid; grid-template-columns: minmax(0, 167fr) minmax(0, 171fr); gap: 12px; }
.chooser { padding-bottom: 9px; height: 150px; }
.chooser .stack { margin: 11px 0 0 12px; }
.alt { display: block; margin: 11px 0 0 17px; color: #9b9fa4; text-decoration: none; font-weight: 300; }
.popts h3 { margin-bottom: 8px; }
.popts .spin { margin: 0 0 4px 34px; }
.basis, .season { height: 130px; }
.switches { display: flex; gap: 28px; padding: 32px 0 0 16px; }
.basis .toggle { margin: 5px 0 0 8px; }
.dim { color: #8b8f95; }
.basis .dim .toggle { margin-left: 20px; }
.season { overflow: visible; }
.season h3 { border-radius: 5px 5px 0 0; }
.season .stack { margin: 12px 0 0 5px; }
.season .stack + .stack { margin-top: 8px; }
.slide { appearance: none; width: 110px; height: 14px; background: linear-gradient(90deg, #2c8fd0 var(--v), #3b3f46 var(--v)) center / 100% 6px no-repeat; border-radius: 3px; }
.season .slide { margin: 10px 0 0 11px; }
.season .stack + .stack .slide { margin-top: 0; }
.slide::-webkit-slider-thumb { appearance: none; width: 14px; height: 14px; border-radius: 50%; border: 1px solid #24272c; background: radial-gradient(circle, #24272c 1px, transparent 2px), linear-gradient(#50555d, #3a3e45); }
.tip { position: absolute; left: 42px; top: 86px; width: 26px; height: 22px; border: 1px solid #2c3036; border-radius: 2px; background: #474c53; color: #b9bbbe; font-size: 8px; line-height: 20px; text-align: center; }
.editor { padding-bottom: 22px; }
.faders { position: relative; display: flex; justify-content: space-between; padding: 11px 26px 0 36px; }
.fader { appearance: none; writing-mode: vertical-lr; direction: rtl; width: 8px; height: 60px; background: linear-gradient(0deg, #2c8fd0 var(--v), #363a41 var(--v)) center / 4px 100% no-repeat; }
.fader::-webkit-slider-thumb { appearance: none; width: 9px; height: 9px; border-radius: 50%; border: 1px solid #24272c; background: radial-gradient(circle, #24272c 1px, #4a4f57 2px); }
.mini { position: absolute; left: 18px; top: 45px; width: 14px; height: 14px; border: 1px solid #2c3036; border-radius: 2px; background: #474c53; color: #b9bbbe; font-size: 5px; line-height: 12px; text-align: center; }

/* load profile summary */
.summary { padding: 18px 80px 17px 77px; }
.summary h2 { margin: 0 -18px 16px -28px; padding-bottom: 2px; border-bottom: 2px solid #6f7379; }
.wide { margin-bottom: 17px; }
.wide h3 { padding-left: 26px; }
table { width: 100%; border-collapse: collapse; }
th, td { padding: 0; text-align: left; font-weight: 300; }
.use table { table-layout: fixed; }
.use th { height: 36px; font-weight: 500; font-size: 9px; border-bottom: 1px solid #1f2226; }
.use th:first-child, .use td:first-child { padding-left: 83px; width: 398px; }
.use td { height: 36px; color: #a9acb1; background: #555b63; }
.use td:first-child, .res td:first-child { color: #58a892; }
.use tr:nth-child(even) td { background: #60646c; }
.edit { display: block; margin: 11px 4px 0 auto; width: 154px; height: 32px; font-size: 11px; }

/* options */
.opts .body { display: grid; grid-template-columns: minmax(0, 261fr) minmax(0, 296fr); gap: 11px; padding: 10px 99px 26px 102px; align-items: start; }
.opts .left { display: flex; flex-direction: column; gap: 11px; }
.loc { margin: 0 1px 0 4px; padding-bottom: 13px; }
.loc .band { display: flex; margin: 24px 0 12px; padding-left: 47px; height: 42px; background: #555b63; font-size: 9px; line-height: 42px; font-weight: 300; color: #a9acb1; }
.band span { width: 90px; }
.band b { font: 400 16px/42px "Liberation Sans", Arial, sans-serif; color: #58bda0; }
.loc .dark { display: block; margin-left: 129px; width: 74px; }
.sto { margin-left: 4px; padding-bottom: 14px; }
.line { display: flex; align-items: flex-end; }
.sto .line { padding: 27px 19px 0 22px; justify-content: space-between; }
.sto .toggle { margin: 7px 0 0; }
.sto .stack { text-indent: 3px; }
.sto .dark { width: 95px; height: 22px; }
.ctl { padding-bottom: 20px; }
.ctl .line { padding: 31px 18px 0 26px; justify-content: space-between; }
.ctl .toggle { margin-top: 6px; }
.ctl .dark { width: 105px; height: 22px; }
.alp { border-radius: 7px; }
.rat { margin: 0 3px 13px 0; padding-bottom: 14px; }
.rat table { font-family: "Liberation Sans", Arial, sans-serif; table-layout: fixed; }
.rat th { height: 49px; padding-top: 12px; font-weight: 400; font-size: 10px; color: #94979c; }
.rat td { height: 42px; background: #555b63; padding-top: 2px; }
.rat th:first-child, .rat td:first-child { width: 170px; padding-left: 38px; }
.rat td:first-child { padding-left: 44px; font-size: 11px; color: #58bda0; }
.rat td + td { padding-left: 3px; font: 300 9px/14px Inter, sans-serif; color: #a9acb1; }
.acts { display: flex; gap: 24px; padding: 11px 0 0 22px; }
.acts .dark { width: 119px; }
.acts .dark + .dark { width: 74px; }
.sol { margin: 0 4px 11px 0; padding-bottom: 8px; }
.sol .line { padding: 16px 0 9px 63px; }
.sol .line .stack { width: 79px; text-indent: 3px; }
.sol .toggle { margin-top: 1px; }
.sol .dark { display: block; margin-left: 71px; width: 123px; height: 22px; }
.eff { margin: 0 6px 24px 0; padding-bottom: 25px; }
.eff .line { padding: 26px 0 0 32px; align-items: flex-start; }
.eff .line .stack { width: 136px; text-indent: 2px; }
.eff .toggle { margin-top: 3px; }
.eff .box { margin-top: 5px; }
.huge { display: block; width: 100%; height: 48px; font-size: 12px; }
.huge + .huge { margin-top: 14px; }

/* system summary */
.b5 .body { padding: 15px 23px 22px 36px; }
.charts { display: grid; grid-template-columns: minmax(0, 480fr) minmax(0, 221fr); gap: 9px; align-items: start; margin-bottom: 6px; }
.b5 .panel { border-radius: 7px; }
.res th { height: 51px; font-weight: 500; font-size: 9px; }
.res table { table-layout: fixed; }
.res th:first-child { width: 310px; padding-left: 54px; }
.res th:nth-child(2) { width: 235px; }
.res td { height: 31px; background: #555b63; color: #a9acb1; padding-left: 4px; }
.res td:first-child { padding-left: 46px; }
.res tr:nth-child(even) td { background: #5f656d; }
.exports { display: flex; justify-content: flex-end; gap: 11px; padding: 15px 9px 0 0; }
.exports .dark { width: 177px; height: 36px; font-size: 15px; line-height: 18px; }

/* dialogs */
.pops, .side { display: flex; flex-direction: column; min-width: 0; }
.pops { padding-top: 529px; }
.zipd { width: 160px; height: 123px; margin: 0 4px 70px auto; }
.zipd .stack { margin: 28px 0 0 22px; text-indent: 3px; font-weight: 600; }
.zipd .box { margin-top: 2px; }
.stod { width: 253px; height: 393px; margin: 0 4px 68px auto; }
.fld { display: flex; justify-content: space-between; padding: 0 13px 0 15px; height: 37px; font-weight: 300; color: #a9acb1; }
.fld span { padding-top: 4px; line-height: 13px; }
.stod h3 { margin-bottom: 27px; }
.stod .box, .cost .box { font-size: 7px; font-weight: 400; }
.stod .dark { display: block; width: 92px; height: 26px; margin: -1px 13px 0 auto; }
.ctrd { height: 330px; }
.limits { display: flex; padding: 37px 0 0 34px; align-items: flex-end; }
.limits .stack:first-child { width: 125px; flex: none; }
.limits .stack:nth-child(2) { width: 101px; flex: none; }
.grey { color: #a9acb1; font-weight: 400; }
.grey small { width: 91px; white-space: normal; font-size: 6px; line-height: 9px; margin: 5px 0 4px; font-weight: 500; }
.mini-l { font-size: 8px; font-weight: 400; color: #a9acb1; }
.mini-l .toggle { margin: 3px 0 3px; }
.lower { padding: 16px 0 0 34px; }
.lower .mini-l { margin-left: 4px; }
.ctrd .box { padding-left: 11px; }
.lower .box, .charge .box { margin-top: 2px; }
.charge { margin: 14px 0 0 34px; }
.last { display: flex; align-items: flex-start; justify-content: space-between; padding: 19px 13px 0 34px; }
.last .dark { width: 92px; height: 26px; margin-top: 14px; }
.rest { margin: -1px 0 0 12px; font-weight: 300; color: #a6a9ae; }
.side { padding-top: 63px; }
.cost { width: 253px; height: 557px; margin: 0 0 103px 8px; border-bottom: 1px solid #1b1d20; }
.cost h3 { margin-bottom: 25px; }
.cost .fld span { width: 88px; padding-top: 6px; }
.tree { padding: 8px 0 0 18px; font-weight: 300; color: #a9acb1; }
.tree label { display: flex; align-items: center; gap: 10px; height: 20px; margin-bottom: 5px; }
.tree .kid { position: relative; margin: 11px 0 4px 46px; }
.tree .kid::before { content: ""; position: absolute; left: -26px; top: -11px; width: 26px; height: 21px; border: solid #8d9196; border-width: 0 0 1px 1px; }
.tree .sgip { gap: 5px; }
.tree .near { margin-top: 5px; }
.tree .near::before { top: -5px; height: 16px; }
.rated { width: 448px; height: 124px; margin-bottom: 216px; border-bottom: 1px solid #1b1d20; }
.rated div { display: flex; justify-content: space-between; padding: 16px 50px 0 49px; }
.rated .stack { text-indent: 8px; }
.rated .mid { margin-top: 5px; text-indent: 0; }
.arrays { display: grid; grid-template-columns: 253px minmax(0, 1fr); gap: 7px; padding-left: 119px; }
.sold { height: 502px; border: solid #74797f; border-width: 0 1px 1px; }
.sold h3 { margin: 0 -1px 26px; padding-right: 14px; }
.sold .fld { height: 39px; padding: 0 12px 0 14px; }
.sold .fld span { width: 100px; padding-top: 6px; line-height: 13px; }
.sold .fld:last-child { margin-top: 6px; }
.pv { display: flex; flex-direction: column; gap: 7px; min-width: 0; }
.made { margin: 0 5px -1px 0; height: 155px; }
.made th { height: 26px; font-weight: 500; font-size: 9px; padding-top: 8px; }
.made td { height: 34px; background: #555b63; color: #a9acb1; font-size: 9px; }
.made td:first-child { width: 237px; padding-left: 31px; font: 400 11px/14px "Liberation Sans", Arial, sans-serif; color: #58bda0; }
.made tr:nth-child(even) td { background: #60646c; }
.made td:nth-child(2) { width: 130px; }
.pvsum { height: 173px; }
.pvload { width: 239px; height: 162px; }
</style>
